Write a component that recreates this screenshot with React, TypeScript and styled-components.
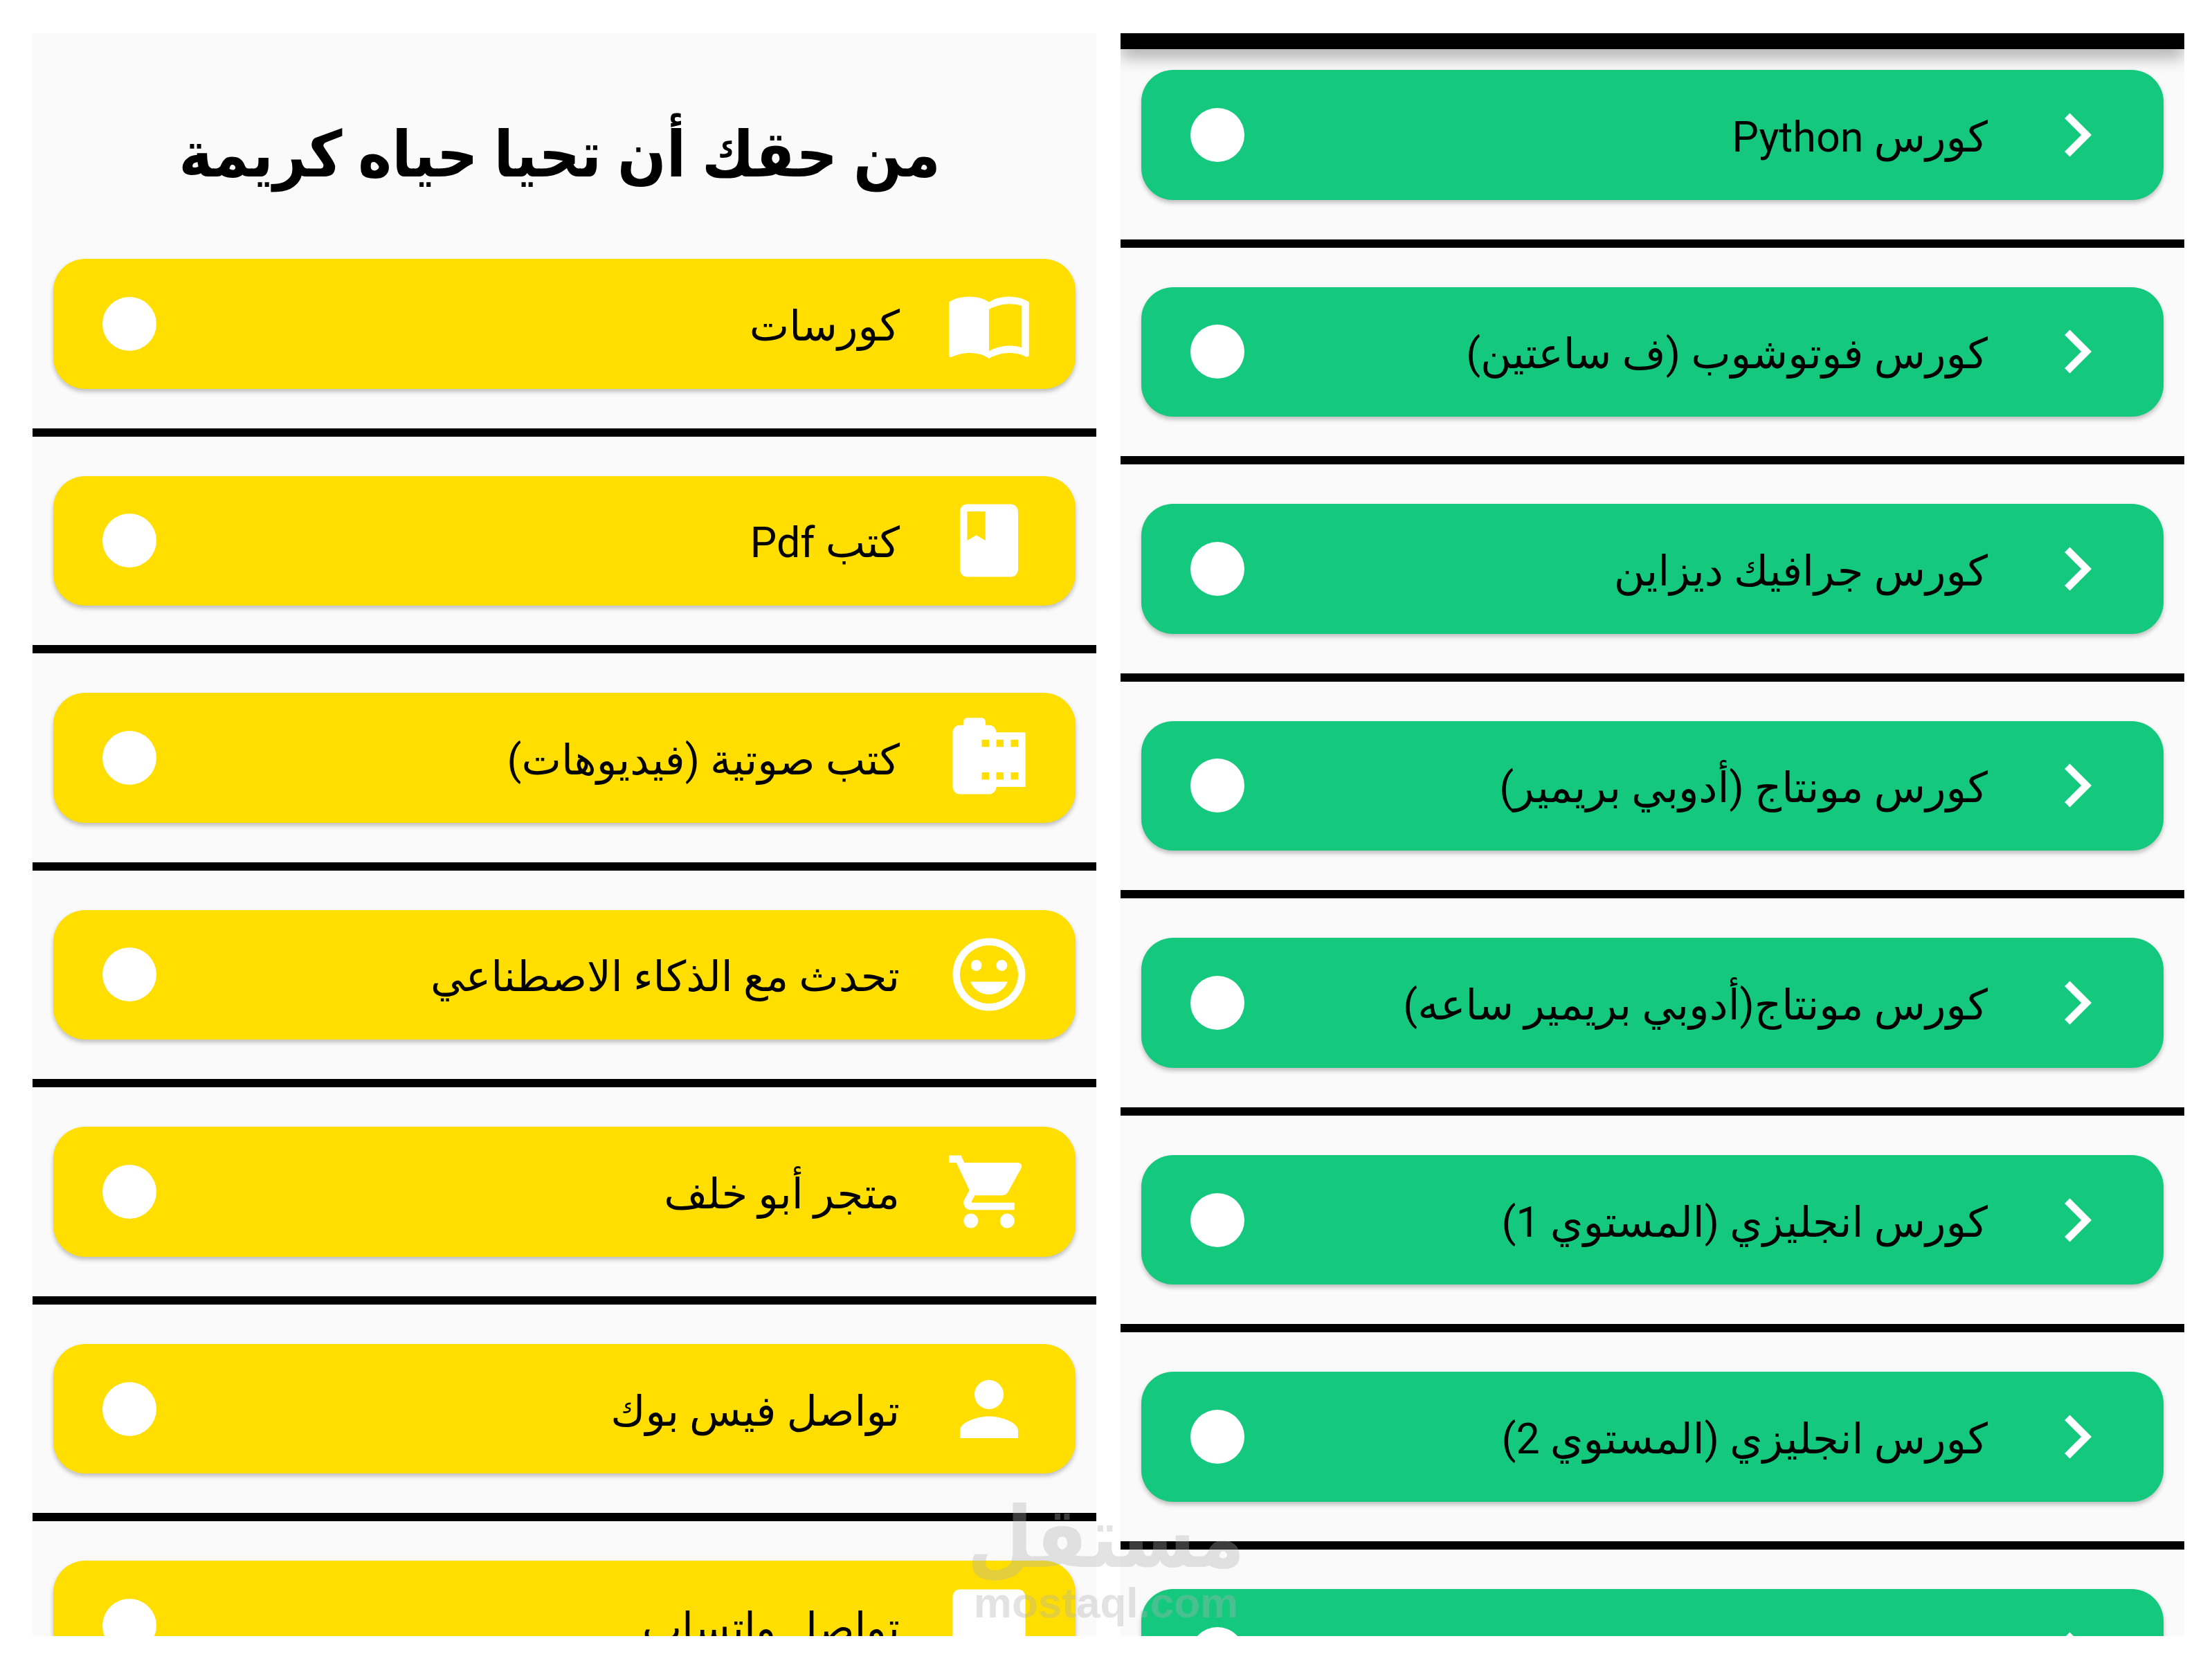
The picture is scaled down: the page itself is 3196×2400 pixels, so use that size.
import React from "react";
import styled, { createGlobalStyle } from "styled-components";
import type { IconType } from "react-icons";
import {
  MdCameraRoll,
  MdChatBubble,
  MdChevronRight,
  MdClass,
  MdImportContacts,
  MdMood,
  MdPerson,
  MdShoppingCart,
} from "react-icons/md";

const GlobalStyle = createGlobalStyle`
  *, *::before, *::after { box-sizing: border-box; }
  body {
    margin: 0;
    background: #fff;
    color: #000;
    font-family: Roboto, "DejaVu Sans", sans-serif;
  }
`;

const Page = styled.div`
  position: relative;
  display: grid;
  grid-template-columns: 1fr 1fr;
  column-gap: 35px;
  height: 100vh;
  padding: 48px 40px 36px 47px;
`;

const Screen = styled.section`
  display: flex;
  flex-direction: column;
  min-width: 0;
  min-height: 0;
  overflow: hidden;
  background: #fafafa;
`;

const TitleBar = styled.header`
  flex: none;
  display: flex;
  align-items: center;
  justify-content: center;
  height: 326px;
  padding: 26px 44px 0 30px;
`;

const Title = styled.h1`
  margin: 0;
  font-family: Roboto, "DejaVu Sans Condensed", "DejaVu Sans", sans-serif;
  font-size: 92px;
  line-height: 120px;
  font-weight: 700;
  white-space: nowrap;
`;

const AppBar = styled.header`
  flex: none;
  height: 23px;
  margin-bottom: 30px;
  background: #000;
  box-shadow: 0 10px 24px rgba(0, 0, 0, 0.36);
`;

const List = styled.ul`
  flex: none;
  margin: 0;
  padding: 0;
  list-style: none;
`;

const Row = styled.li`
  & + & {
    margin-top: 57px;
    padding-top: 57px;
    border-top: 12px solid #000;
  }
`;

const CardButton = styled.button<{ $color: string }>`
  display: flex;
  align-items: center;
  width: calc(100% - 60px);
  aspect-ratio: 63 / 8;
  margin: 0 30px;
  padding: 0 62px 0 71px;
  border: 0;
  border-radius: 46px;
  background: ${(p) => p.$color};
  box-shadow: 0 4px 6px rgba(0, 0, 0, 0.24);
  color: #000;
  font-family: inherit;
  cursor: pointer;

  svg {
    flex: none;
    width: 126px;
    height: 126px;
    color: #fff;
  }
`;

const Label = styled.span`
  flex: 1;
  min-width: 0;
  padding: 6px 66px 0;
  font-size: 61px;
  line-height: 72px;
  font-weight: 400;
  text-align: right;
  white-space: nowrap;
`;

const Dot = styled.span`
  flex: none;
  width: 78px;
  height: 78px;
  border-radius: 50%;
  background: #fff;
`;

const Watermark = styled.div`
  position: absolute;
  bottom: 48px;
  left: 50%;
  transform: translateX(-50%);
  display: flex;
  flex-direction: column;
  align-items: center;
  color: #b0b0b0;
  font-weight: 700;
  white-space: nowrap;
  opacity: 0.34;
  pointer-events: none;
`;

const WatermarkName = styled.span`
  font-family: "DejaVu Sans Condensed", "DejaVu Sans", sans-serif;
  font-size: 122px;
  line-height: 116px;
`;

const WatermarkSite = styled.span`
  font-family: "Liberation Sans", sans-serif;
  font-size: 62px;
  line-height: 72px;
`;

interface Entry {
  label: string;
  icon: IconType;
}

const menu: Entry[] = [
  { label: "كورسات", icon: MdImportContacts },
  { label: "كتب Pdf", icon: MdClass },
  { label: "كتب صوتية (فيديوهات)", icon: MdCameraRoll },
  { label: "تحدث مع الذكاء الاصطناعي", icon: MdMood },
  { label: "متجر أبو خلف", icon: MdShoppingCart },
  { label: "تواصل فيس بوك", icon: MdPerson },
  { label: "تواصل واتساب", icon: MdChatBubble },
];

const courses: Entry[] = [
  "كورس Python",
  "كورس فوتوشوب (ف ساعتين)",
  "كورس جرافيك ديزاين",
  "كورس مونتاج (أدوبي بريمير)",
  "كورس مونتاج(أدوبي بريمير ساعه)",
  "كورس انجليزي (المستوي 1)",
  "كورس انجليزي (المستوي 2)",
  "",
].map((label) => ({ label, icon: MdChevronRight }));

function CardList({ entries, color }: { entries: Entry[]; color: string }) {
  return (
    <List>
      {entries.map(({ label, icon: Icon }, i) => (
        <Row key={i}>
          <CardButton type="button" $color={color}>
            <Dot />
            <Label dir="rtl">{label}</Label>
            <Icon aria-hidden="true" />
          </CardButton>
        </Row>
      ))}
    </List>
  );
}

export default function App() {
  return (
    <Page lang="ar">
      <GlobalStyle />
      <Screen>
        <TitleBar>
          <Title dir="rtl">من حقك أن تحيا حياه كريمة</Title>
        </TitleBar>
        <CardList entries={menu} color="#ffde00" />
      </Screen>
      <Screen>
        <AppBar />
        <CardList entries={courses} color="#14c97e" />
      </Screen>
      <Watermark>
        <WatermarkName dir="rtl">مستقل</WatermarkName>
        <WatermarkSite>mostaql.com</WatermarkSite>
      </Watermark>
    </Page>
  );
}
